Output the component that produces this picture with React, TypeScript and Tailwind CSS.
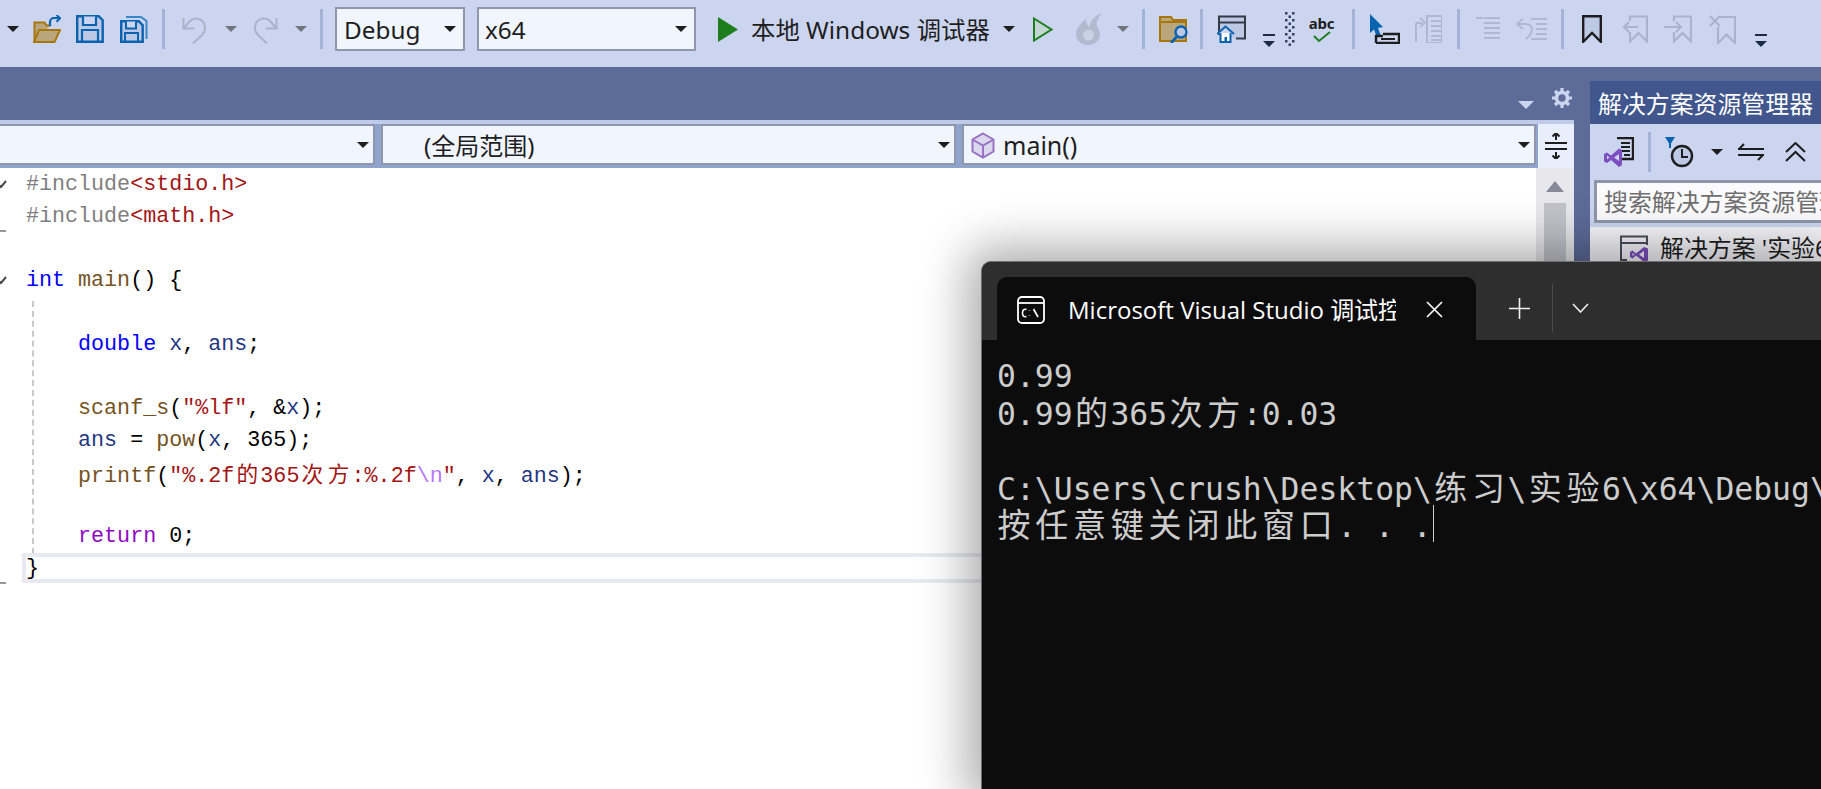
import type { ReactNode } from "react";

const BLUE = "#0a63b0";
const GOLD = "#a8770c";
const GOLDFILL = "#baa67c";
const GRAY = "#a9b3c9";
const DARK = "#1e1e1e";
const FILL = "#bcc8e4";

function Ico({ w, h, ml, children }: { w: number; h: number; ml: number; children: ReactNode }) {
  return (
    <svg width={w} height={h} viewBox={`0 0 ${w} ${h}`} fill="none" className="shrink-0 block" style={{ marginLeft: ml }}>
      {children}
    </svg>
  );
}

function Arrow({ ml, color = "#1e1e1e" }: { ml: number; color?: string }) {
  return (
    <Ico w={12} h={6} ml={ml}>
      <path d="M0 0h12L6 6z" fill={color} />
    </Ico>
  );
}

function MiniArrow({ ml }: { ml: number }) {
  return (
    <div className="shrink-0 mt-[24px]" style={{ marginLeft: ml }}>
      <svg width="12" height="14" viewBox="0 0 12 14" fill="none" className="block">
        <path d="M0 1h12" stroke="#1c2a45" strokeWidth="2" />
        <path d="M0 7h12l-6 6z" fill="#1c2a45" />
      </svg>
    </div>
  );
}

function Sep({ ml }: { ml: number }) {
  return <div className="w-[3px] h-[40px] bg-[#a3b2d6] shrink-0" style={{ marginLeft: ml }} />;
}

function Combo({ className, children }: { className: string; children?: ReactNode }) {
  return (
    <div className={`shrink-0 flex items-center border-2 border-[#8e97ab] bg-[#f1f5fe] text-[#1e1e1e] ${className}`}>
      <div className="flex-1 flex items-center min-w-0 pt-[2px]">{children}</div>
      <svg width="12" height="6" viewBox="0 0 12 6" className="mr-[4px] shrink-0">
        <path d="M0 0h12L6 6z" fill="#1e1e1e" />
      </svg>
    </div>
  );
}

function Toolbar() {
  return (
    <div className="h-[67px] bg-[#ccd5f0] pb-[9px] flex items-center overflow-hidden">
      <Arrow ml={7} />
      <Ico w={28} h={28} ml={14}>
        <path d="M1.5 26V7.5h10l2 3h4" stroke={GOLD} strokeWidth="2" fill={GOLDFILL} />
        <path d="M1 27h20.5l5.5-12H6z" fill={GOLDFILL} stroke={GOLD} strokeWidth="2" />
        <path d="M17 11V7a4 4 0 0 1 4-4h6" stroke={BLUE} strokeWidth="2.2" />
        <path d="M23.5 0l3.6 3.2-3.6 3.6" stroke={BLUE} strokeWidth="2" />
      </Ico>
      <Ico w={28} h={28} ml={15}>
        <path d="M1.2 1.2h21.5l4 4v21.6H1.2z" stroke={BLUE} strokeWidth="2.4" fill={FILL} />
        <path d="M7 1.5v8.5h13V1.5" stroke={BLUE} strokeWidth="2.2" fill="#ccd5f0" />
        <path d="M6 27V15h16v12" stroke={BLUE} strokeWidth="2.2" />
      </Ico>
      <Ico w={28} h={28} ml={16}>
        <path d="M6 2h15l5.5 4v18" stroke="#3c86c7" strokeWidth="2" />
        <path d="M1.2 6.2h17.5l4 4v16.6H1.2z" stroke={BLUE} strokeWidth="2.4" fill={FILL} />
        <path d="M6 6.5v7h10v-7" stroke={BLUE} strokeWidth="2" fill="#ccd5f0" />
        <path d="M5 27v-9h13v9" stroke={BLUE} strokeWidth="2" />
      </Ico>
      <Sep ml={14} />
      <Ico w={25} h={29} ml={17}>
        <path d="M1.5 3v10.5h11" stroke={GRAY} strokeWidth="2" />
        <path d="M1.5 13.5L8 6q3-3 7-2.5 8 1.5 8 9.5 0 4-3 7l-9 8.5" stroke={GRAY} strokeWidth="2" />
      </Ico>
      <Arrow ml={18} color="#72757d" />
      <Ico w={25} h={29} ml={16}>
        <g transform="translate(25 0) scale(-1 1)">
          <path d="M1.5 3v10.5h11" stroke={GRAY} strokeWidth="2" />
          <path d="M1.5 13.5L8 6q3-3 7-2.5 8 1.5 8 9.5 0 4-3 7l-9 8.5" stroke={GRAY} strokeWidth="2" />
        </g>
      </Ico>
      <Arrow ml={17} color="#72757d" />
      <Sep ml={13} />
      <Combo className="w-[130px] ml-[12px] pl-[7px] pr-[3px] h-[44px] text-[24.3px]">Debug</Combo>
      <Combo className="w-[219px] ml-[12px] pl-[6px] pr-[3px] h-[44px] text-[24.3px]">x64</Combo>
      <Ico w={20} h={25} ml={22}>
        <path d="M0 0l20 12.5L0 25z" fill="#1e7e1e" />
      </Ico>
      <span className="ml-[13px] pt-[2px] text-[24.4px] text-[#1e1e1e] whitespace-pre shrink-0 w-[241px]">本地 Windows 调试器</span>
      <Arrow ml={11} />
      <Ico w={20} h={25} ml={18}>
        <path d="M1 1.5l17.5 11L1 23.5z" stroke="#1e7e1e" strokeWidth="2" fill="#c3d7d2" />
      </Ico>
      <Ico w={27} h={32} ml={23}>
        <path d="M26 0C18 3 14 8 13.5 14 11 12 10 10 10 6 4 11 0 16 0 21.5 0 27.5 5.5 32 12 32c7 0 12-5 12-11 0-4-3.500-6-3.500-10 0-4 2.500-8 5.500-11z" fill="#b1bacf" />
        <circle cx="12.500" cy="22" r="5.500" fill="#c9d1e4" />
      </Ico>
      <Arrow ml={14} color="#72757d" />
      <Sep ml={13} />
      <Ico w={31} h={28} ml={14}>
        <path d="M1 2h11l2 3h13v21H1z" fill={GOLDFILL} stroke={GOLD} strokeWidth="2" />
        <path d="M1 7h26" stroke={GOLD} strokeWidth="2" />
        <circle cx="22" cy="17" r="5.5" stroke={BLUE} strokeWidth="2.4" fill={FILL} />
        <path d="M18 21.5L12 28" stroke={BLUE} strokeWidth="2.8" />
      </Ico>
      <Sep ml={10} />
      <Ico w={29} h={28} ml={14}>
        <path d="M2 20V1.500h26v22h-9" stroke="#333a48" strokeWidth="2" fill={FILL} />
        <path d="M2 7.5h26" stroke="#333a48" strokeWidth="2" />
        <path d="M0 19L8.5 11.5 17 19" fill="#ccd5f0" stroke={BLUE} strokeWidth="2" />
        <path d="M3.500 18v9h10v-9" fill="#fff" stroke={BLUE} strokeWidth="2" />
        <path d="M7.500 27v-5h2.500v5" fill={BLUE} />
      </Ico>
      <MiniArrow ml={17} />
      <Ico w={10} h={34} ml={10}>
        {[0, 7, 14, 21, 28].map((y) => (
          <g key={y} fill="#33406a">
            <rect x="0" y={y} width="2.5" height="2.5" />
            <rect x="7" y={y} width="2.5" height="2.5" />
            <rect x="3.5" y={y + 3.5} width="2.5" height="2.5" />
          </g>
        ))}
      </Ico>
      <div className="ml-[13px] w-[27px] shrink-0 flex flex-col items-center">
        <span className="text-[15px] leading-[14px] font-bold text-[#1e1e1e] font-['Noto_Sans'] tracking-[-0.2px]">abc</span>
        <svg width="18" height="12" viewBox="0 0 18 12" fill="none" className="mt-[1px]">
          <path d="M1 5l5 5L17 1" stroke="#1e7e1e" strokeWidth="2" />
        </svg>
      </div>
      <Sep ml={17} />
      <Ico w={30} h={30} ml={15}>
        <path d="M0 0l13 13-5 1 3 8-4 1.5-3-8L0 19z" fill={BLUE} />
        <path d="M6 29v-7h7M13 20h16v9H6" stroke={DARK} strokeWidth="2.4" />
        <path d="M11 25h14" stroke={DARK} strokeWidth="2" />
      </Ico>
      <Ico w={28} h={28} ml={14}>
        <path d="M2 27V8M2 8h6M6 3L11 7.5 6 12" stroke="#aeb8ce" strokeWidth="2" />
        <path d="M13 1h15v27H13z" stroke="#aeb8ce" strokeWidth="2" />
        <path d="M17 6h11M17 11h11M17 16h11M17 21h11M17 25h11" stroke="#aeb8ce" strokeWidth="2" />
      </Ico>
      <Sep ml={15} />
      <Ico w={24} h={24} ml={16}>
        <path d="M0 1h7M8 6h16M8 11h16M8 16h16M8 21h16M8 1h16" stroke="#aeb8ce" strokeWidth="2" />
      </Ico>
      <Ico w={31} h={26} ml={16}>
        <path d="M7 3L1 8l6 5M1 8h8q7 0 7 6 0 4-6 9" stroke="#aeb8ce" strokeWidth="2" />
        <path d="M15 3h16M20 8h11M20 13h11M20 18h11M15 23h16" stroke="#aeb8ce" strokeWidth="2" />
      </Ico>
      <Sep ml={14} />
      <Ico w={20} h={28} ml={18}>
        <path d="M1.2 1.2h17.6v25.6L10 18l-8.8 8.8z" fill={FILL} stroke={DARK} strokeWidth="2.4" />
      </Ico>
      <Ico w={26} h={28} ml={20}>
        <path d="M8 6V1.5h17v25L16.5 18 8 26.5V17" stroke={GRAY} strokeWidth="2.2" />
        <path d="M16 12H2M7 7l-5 5 5 5" stroke={GRAY} strokeWidth="2" />
      </Ico>
      <Ico w={28} h={28} ml={16}>
        <path d="M10 6V1.5h17v25L18.5 18 10 26.5V17" stroke={GRAY} strokeWidth="2.2" />
        <path d="M0 12h17M12 7l5 5-5 5" stroke={GRAY} strokeWidth="2" />
      </Ico>
      <Ico w={27} h={29} ml={17}>
        <path d="M9 2h17v26l-8.5-8.5L9 28V12" stroke={GRAY} strokeWidth="2.2" />
        <path d="M1 1l10 10M11 1L1 11" stroke={GRAY} strokeWidth="2" />
      </Ico>
      <MiniArrow ml={19} />
    </div>
  );
}

const CJK = /[\u4e00-\u9fff]/;

// full-width characters take two cells in both the editor and the console
function Cells({ text, cell }: { text: string; cell: string }) {
  return (
    <>
      {Array.from(text).map((ch, i) =>
        CJK.test(ch) ? (
          <span key={i} className={`inline-block text-center font-['Noto_Sans_CJK_SC'] ${cell}`}>
            {ch}
          </span>
        ) : (
          ch
        )
      )}
    </>
  );
}

type Tok = [string, string];
const PP = "#808080";
const STR = "#a31515";
const KW = "#0000ff";
const FN = "#74531f";
const VAR = "#1f377f";
const TXT = "#000000";

const LINES: Tok[][] = [
  [["#include", PP], ["<stdio.h>", STR]],
  [["#include", PP], ["<math.h>", STR]],
  [],
  [["int", KW], [" ", TXT], ["main", FN], ["() {", TXT]],
  [],
  [["    ", TXT], ["double", KW], [" ", TXT], ["x", VAR], [", ", TXT], ["ans", VAR], [";", TXT]],
  [],
  [["    ", TXT], ["scanf_s", FN], ["(", TXT], ["\"%lf\"", STR], [", &", TXT], ["x", VAR], [");", TXT]],
  [["    ", TXT], ["ans", VAR], [" = ", TXT], ["pow", FN], ["(", TXT], ["x", VAR], [", 365);", TXT]],
  [["    ", TXT], ["printf", FN], ["(", TXT], ["\"%.2f的365次方:%.2f", STR], ["\\n", "#b776fb"], ["\"", STR], [", ", TXT], ["x", VAR], [", ", TXT], ["ans", VAR], [");", TXT]],
  [],
  [["    ", TXT], ["return", "#8f08c4"], [" 0;", TXT]],
  [["}", TXT]],
];

function Editor() {
  return (
    <div className="flex-1 flex min-h-0">
      <div className="relative flex-1 bg-white overflow-hidden font-['Liberation_Mono'] text-[21.7px] whitespace-pre">
        <div className="absolute left-[32px] top-[133px] h-[253px] border-l-2 border-dashed border-[#c9c9c9]" />
        {LINES.map((toks, i) => (
          <div key={i} className="relative h-[32px] pl-[26px] leading-[34px]">
            {i === 12 && <div className="absolute left-[22px] right-0 inset-y-[1px] border-y-4 border-l-4 border-[#e9e9f1]" />}
            {(i === 0 || i === 3) && (
              <svg width="8" height="10" viewBox="0 0 8 10" fill="none" className="absolute left-0 top-[11px]">
                <path d="M-1 6l2 2L6 2" stroke="#4a4a4a" strokeWidth="2" />
              </svg>
            )}
            {(i === 1 || i === 12) && <div className="absolute left-0 bottom-0 w-[6px] h-[2px] bg-[#9a9a9a]" />}
            <span className="relative">
              {toks.map(([t, c], j) => (
                <span key={j} style={{ color: c }}>
                  <Cells text={t} cell="w-[26.1px]" />
                </span>
              ))}
            </span>
          </div>
        ))}
      </div>
      <div className="w-[38px] bg-[#e8e8ec] flex flex-col items-center pt-[13px]">
        <svg width="18" height="11" viewBox="0 0 18 11">
          <path d="M0 11h18L9 0z" fill="#868999" />
        </svg>
        <div className="w-[22px] h-[200px] mt-[11px] bg-[#c2c3c9]" />
      </div>
    </div>
  );
}

function Document() {
  return (
    <div className="flex-1 min-w-0 bg-[#5d6b99] flex flex-col">
      <div className="h-[53px] flex items-center justify-end pr-[18px] pt-[12px]">
        <svg width="16" height="8" viewBox="0 0 16 8" className="mt-[10px]">
          <path d="M0 0h16L8 8z" fill="#ccd5f0" />
        </svg>
        <svg width="20" height="20" viewBox="0 0 20 20" fill="none" className="ml-[18px] -mt-[4px]">
          <circle cx="10" cy="10" r="5.5" stroke="#ccd5f0" strokeWidth="3.6" />
          <path d="M10 0v4M10 16v4M0 10h4M16 10h4M3 3l3 3M14 14l3 3M17 3l-3 3M6 14l-3 3" stroke="#ccd5f0" strokeWidth="3.2" />
        </svg>
      </div>
      <div className="mr-[16px] flex-1 flex flex-col min-h-0">
        <div className="h-[48px] bg-[#8fa3cc] border-t-4 border-[#c0cbe9] flex text-[24px]">
          <Combo className="h-[41px] w-[378px] -ml-[3px] border-l-0" />
          <Combo className="h-[41px] w-[575px] ml-[6px] pl-[41px]">(全局范围)</Combo>
          <Combo className="h-[41px] w-[574px] ml-[6px] pl-[7px]">
            <svg width="24" height="27" viewBox="0 0 24 27" fill="none" className="mr-[8px] shrink-0">
              <path d="M12 1.5l10.5 6v12L12 25.5l-10.5-6v-12z" fill="#dcd8ee" stroke="#9a72c4" strokeWidth="2" />
              <path d="M1.5 7.5L12 13.5l10.5-6M12 13.5v12" stroke="#9a72c4" strokeWidth="2" />
            </svg>
            <span className="text-[25px]">main()</span>
          </Combo>
          <div className="w-[36px] h-[44px] ml-[2px] bg-[#e8eefc] flex items-center justify-center shrink-0">
            <svg width="22" height="26" viewBox="0 0 22 26" fill="none">
              <path d="M0 10h22M0 16h22M11 0v7M11 19v7M7.500 3.500L11 0l3.500 3.500M7.500 22.500L11 26l3.500-3.500" stroke="#1e1e1e" strokeWidth="2" />
            </svg>
          </div>
        </div>
        <Editor />
      </div>
    </div>
  );
}

function Explorer() {
  return (
    <div className="w-[231px] shrink-0 bg-[#5d6b99] pt-[14px] flex flex-col overflow-hidden">
      <div className="h-[43px] bg-[#40568d] text-white text-[23.9px] pl-[8px] pt-[3px] flex items-center whitespace-nowrap shrink-0">解决方案资源管理器</div>
      <div className="h-[56px] bg-[#ccd5f0] flex items-center shrink-0">
        <Ico w={30} h={31} ml={14}>
          <path d="M13 1h16v21H18" fill="#ccd5f0" stroke={DARK} strokeWidth="2.4" />
          <path d="M17 6h9M17 10h9M17 14h9M20 18h6" stroke={DARK} strokeWidth="2" />
          <path fillRule="evenodd" d="M0 17l3-1.500 4 3 8-7 3 1.500v15L15 30l-8-7-4 3-3-1.500zM3 18.500v4l2.500-2zM10 20.500l5 3.500v-7z" fill="#7d4fc0" />
        </Ico>
        <Sep ml={14} />
        <Ico w={29} h={31} ml={14}>
          <circle cx="17" cy="19" r="10" fill={FILL} stroke={DARK} strokeWidth="2.4" />
          <path d="M17 12v8h6" stroke={DARK} strokeWidth="2" />
          <path d="M0 0h10L5 8z" fill={BLUE} />
          <path d="M4 5h2v6H4z" fill={BLUE} />
        </Ico>
        <Arrow ml={17} />
        <Ico w={26} h={18} ml={15}>
          <path d="M0 6h26M6 1L1 6M0 12h26M20 17l5-5" stroke={DARK} strokeWidth="2" />
        </Ico>
        <Ico w={21} h={20} ml={21}>
          <path d="M1 10L10.5 1 20 10M1 19l9.5-9 9.5 9" stroke={DARK} strokeWidth="2" />
        </Ico>
      </div>
      <div className="h-[47px] bg-[#ccd5f0] pl-[4px] pb-[4px] shrink-0">
        <div className="h-full -mr-[6px] border-[3px] border-[#8e97ab] bg-[#fbfbfd] text-[#6f6f6f] text-[23.9px] pl-[7px] pt-[1px] flex items-center whitespace-nowrap overflow-hidden">
          搜索解决方案资源管理器
        </div>
      </div>
      <div className="flex-1 bg-[#f6f6fb] pt-[6px]">
        <div className="flex items-center h-[30px] whitespace-pre text-[23.9px] text-[#1e1e1e]">
          <svg width="28" height="27" viewBox="0 0 28 27" fill="none" className="ml-[30px] mr-[12px] shrink-0">
            <path d="M7 25H1V1.500h26V10M1 8h26" stroke="#4a4f5c" strokeWidth="2" />
            <path fillRule="evenodd" d="M10 17l2.500-1.500 3.500 3 8-6.500 4 1.500v12L24 27l-8-6.500-3.500 3L10 22zM12.500 18v3l2-1.500zM19 19.500l5 3.500v-7z" fill="#7d4fc0" />
          </svg>
          解决方案 '实验6'
        </div>
      </div>
    </div>
  );
}

function Console() {
  const cell = "w-[37.8px] text-[33px]";
  return (
    <div className="absolute left-[981px] top-[261px] right-0 bottom-0 bg-[#0c0c0c] rounded-tl-[10px] shadow-[0_0_48px_14px_rgba(0,0,0,0.33)] border-t border-l border-[#6f6f6f] flex flex-col">
      <div className="h-[78px] bg-[#2e2e2e] rounded-tl-[10px] pl-[15px] pt-[15px] flex shrink-0">
        <div className="w-[479px] h-[63px] bg-[#0c0c0c] rounded-t-[10px] pl-[20px] pt-[2px] flex items-center text-white shrink-0">
          <svg width="28" height="28" viewBox="0 0 28 28" fill="none" className="shrink-0">
            <rect x="1" y="1" width="26" height="26" rx="4" stroke="#fff" strokeWidth="1.8" />
            <path d="M1 7h26" stroke="#fff" strokeWidth="1.8" />
            <path d="M9.5 13.5q-4-1-4 3.500t4 3.500M12.500 14v.5M12.500 19v.5" stroke="#fff" strokeWidth="1.6" />
            <path d="M16.500 13l4.500 8" stroke="#fff" strokeWidth="1.6" />
          </svg>
          <div className="w-[328px] ml-[23px] mt-[1px] overflow-hidden whitespace-nowrap text-[24px] font-['Open_Sans','Noto_Sans_CJK_SC',sans-serif]">Microsoft Visual Studio 调试控制台</div>
          <svg width="17" height="17" viewBox="0 0 17 17" fill="none" className="ml-[30px] shrink-0">
            <path d="M1 1l15 15M16 1L1 16" stroke="#fff" strokeWidth="1.6" />
          </svg>
        </div>
        <div className="flex items-center h-[48px] mt-[7px]">
          <svg width="21" height="21" viewBox="0 0 21 21" fill="none" className="ml-[33px]">
            <path d="M10.5 0v21M0 10.5h21" stroke="#f0f0f0" strokeWidth="1.6" />
          </svg>
          <div className="w-px h-[48px] bg-[#4a4a4a] ml-[22px]" />
          <svg width="17" height="10" viewBox="0 0 17 10" fill="none" className="ml-[19px]">
            <path d="M1 1l7.5 8L16 1" stroke="#f0f0f0" strokeWidth="1.6" />
          </svg>
        </div>
      </div>
      <div className="pl-[15px] pt-[18px] text-[#cccccc] font-['DejaVu_Sans_Mono'] text-[31.4px] leading-[37.4px] whitespace-pre">
        <div className="h-[37.4px]">0.99</div>
        <div className="h-[37.4px] relative -top-[2px]"><Cells text="0.99的365次方:0.03" cell={cell} /></div>
        <div className="h-[37.4px]">&nbsp;</div>
        <div className="h-[37.4px] relative -top-[2px]"><Cells text="C:\Users\crush\Desktop\练习\实验6\x64\Debug\实验6.exe" cell={cell} /></div>
        <div className="h-[37.4px] relative -top-[3px] flex items-stretch -ml-[2px]">
          <span><Cells text="按任意键关闭此窗口" cell={cell} /><span className="ml-[2px]">. . .</span></span>
          <span className="w-px bg-[#cccccc] ml-[1px]" />
        </div>
      </div>
    </div>
  );
}

export default function App() {
  return (
    <div className="relative w-[1821px] h-[789px] overflow-hidden flex flex-col bg-white font-['Noto_Sans','Noto_Sans_CJK_SC',sans-serif]">
      <Toolbar />
      <div className="flex-1 flex min-h-0">
        <Document />
        <Explorer />
      </div>
      <Console />
    </div>
  );
}
